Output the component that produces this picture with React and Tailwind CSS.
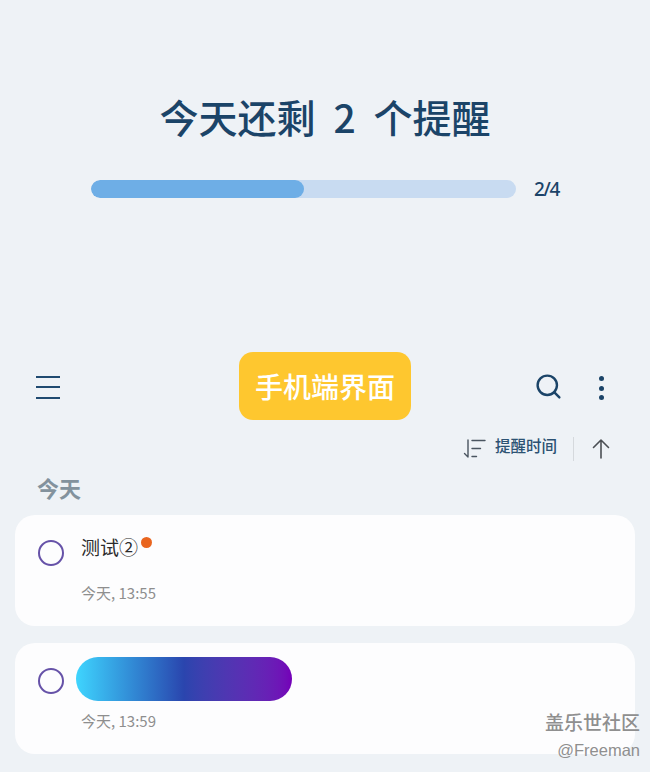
import { Search } from 'lucide-react'

const CJK = "font-['Noto_Sans_CJK_SC','Noto_Sans',sans-serif]"

function Circle() {
  return <div className="w-[26px] h-[26px] rounded-full border-2 border-[#6652a8] shrink-0" />
}

function SortIcon() {
  return (
    <svg width="25" height="22" viewBox="0 0 25 22" fill="none" stroke="#4a5560" strokeWidth="1.4" strokeLinecap="round">
      <path d="M6 2v17M2.5 15.5 6 19" />
      <path d="M10 2.5h13M10 10.5h8.5M10 18.5h4.5" />
    </svg>
  )
}

function ArrowUp() {
  return (
    <svg width="18" height="22" viewBox="0 0 18 22" fill="none" stroke="#4b4f54" strokeWidth="1.6" strokeLinecap="round" strokeLinejoin="round">
      <path d="M9 20V2M1.5 9.5 9 2l7.5 7.5" />
    </svg>
  )
}

function Progress() {
  return (
    <div className="flex items-center pl-[91px] mt-[37px]">
      <div className="w-[425px] h-[18px] rounded-full bg-[#c8dbf1] overflow-hidden">
        <div className="w-1/2 h-full rounded-full bg-[#6eaee6]" />
      </div>
      <span className="ml-[18px] text-[19px] leading-[18px] tracking-[-1.3px] font-medium text-[#1b4468] font-['Noto_Sans',sans-serif]">2/4</span>
    </div>
  )
}

function TopBar() {
  return (
    <div className="flex items-center h-[68px] mt-[154px] pl-[36px] pr-[46px]">
      <div className="w-[24px] flex flex-col gap-[8.5px] mt-[2px]">
        <div className="h-[2px] bg-[#1f4a70]" />
        <div className="h-[2px] bg-[#1f4a70]" />
        <div className="h-[2px] bg-[#1f4a70]" />
      </div>
      <div className="ml-[179px] w-[172px] h-[68px] rounded-[14px] bg-[#fec72f] flex items-center justify-center text-white text-[28px] font-medium">
        手机端界面
      </div>
      <Search size={29} strokeWidth={2} className="ml-auto text-[#1b4468]" />
      <div className="ml-[36px] mt-[4px] flex flex-col gap-[4.5px]">
        <div className="w-[5px] h-[5px] rounded-full bg-[#1b4468]" />
        <div className="w-[5px] h-[5px] rounded-full bg-[#1b4468]" />
        <div className="w-[5px] h-[5px] rounded-full bg-[#1b4468]" />
      </div>
    </div>
  )
}

function SortBar() {
  return (
    <div className="flex items-center justify-end h-[26px] mt-[16px] pr-[40px]">
      <SortIcon />
      <span className="ml-[8px] mb-[6px] text-[15.5px] font-medium text-[#2c5273]">提醒时间</span>
      <div className="ml-[16px] w-px h-[24px] bg-[#d5d9dd]" />
      <div className="ml-[18px]"><ArrowUp /></div>
    </div>
  )
}

export default function App() {
  return (
    <div className={`relative w-[650px] h-[772px] overflow-hidden bg-[#eef2f6] ${CJK}`}>
      <h1 className="pt-[89px] text-center text-[39px] leading-[54px] [word-spacing:9px] font-medium text-[#1b4468] whitespace-pre">今天还剩 2 个提醒</h1>
      <Progress />
      <TopBar />
      <SortBar />

      <div className="mt-[10px] pl-[37px] text-[22px] leading-[30px] font-bold text-[#83929d]">今天</div>

      <div className="mx-[15px] mt-[13px] h-[111px] rounded-[20px] bg-[#fdfdfe] flex items-start pl-[23px]">
        <div className="mt-[25px]"><Circle /></div>
        <div className="ml-[17px]">
          <div className="relative mt-[19px] text-[19px] leading-[26px] text-[#2b2b2b]">
            测试②
            <div className="absolute left-[60px] top-[3px] w-[11px] h-[11px] rounded-full bg-[#e9651f]" />
          </div>
          <div className="mt-[23px] text-[15px] leading-[20px] text-[#8e8e8e]">今天, 13:55</div>
        </div>
      </div>

      <div className="mx-[15px] mt-[17px] h-[111px] rounded-[20px] bg-[#fdfdfe] flex items-start pl-[23px]">
        <div className="mt-[25px]"><Circle /></div>
        <div className="ml-[12px]">
          <div className="mt-[14px] w-[216px] h-[44px] rounded-full bg-gradient-to-r from-[#3fd5fe] via-[#2a45ae] to-[#7400b8]" />
          <div className="mt-[10px] ml-[5px] text-[15px] leading-[20px] text-[#8e8e8e]">今天, 13:59</div>
        </div>
      </div>

      <div className="absolute right-[10px] top-[710px] text-right text-[#8f8f8f]">
        <div className="text-[19px] leading-[24px] font-medium">盖乐世社区</div>
        <div className="mt-[5px] text-[16.5px] leading-[22px] font-['Liberation_Sans',sans-serif]">@Freeman</div>
      </div>
    </div>
  )
}
